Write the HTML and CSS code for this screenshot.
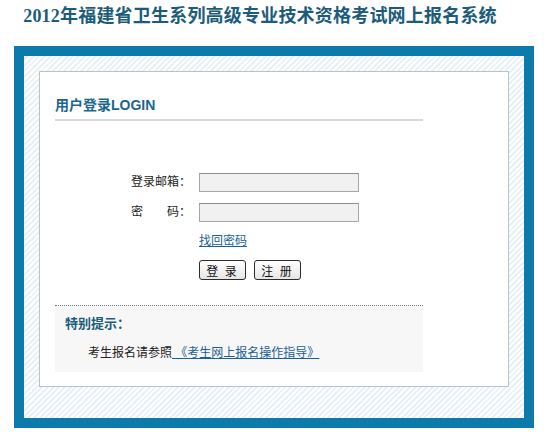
FILE: index.html
```html
<!DOCTYPE html>
<html lang="zh-CN">
<head>
<meta charset="utf-8">
<title>2012年福建省卫生系列高级专业技术资格考试网上报名系统</title>
<link rel="stylesheet" href="styles.css">
</head>
<body>
<h1 class="site-title">2012年福建省卫生系列高级专业技术资格考试网上报名系统</h1>
<div class="frame">
  <div class="panel">
    <div class="content">
      <h2 class="login-title">用户登录LOGIN</h2>
      <form class="login-form">
        <label class="label" for="email">登录邮箱：</label>
        <input class="field" id="email" type="text">
        <label class="label" for="pwd">密&emsp;&emsp;码：</label>
        <input class="field" id="pwd" type="password">
        <span></span>
        <a class="forgot" href="#">找回密码</a>
        <span></span>
        <div class="buttons">
          <button class="btn" type="button">登 录</button>
          <button class="btn" type="button">注 册</button>
        </div>
      </form>
      <div class="tips">
        <div class="tips-title">特别提示：</div>
        <p class="tips-text">考生报名请参照<a class="guide" href="#">&nbsp;《考生网上报名操作指导》</a></p>
      </div>
    </div>
  </div>
</div>
</body>
</html>
```
FILE: styles.css
```css
html, body {
  margin: 0;
  padding: 0;
  background: #fff;
}
body {
  font-family: "Liberation Sans", "Noto Sans CJK SC", sans-serif;
  font-size: 12px;
  color: #222;
}
.site-title {
  margin: 0;
  width: 520px;
  height: 46px;
  padding-top: 1px;
  box-sizing: border-box;
  line-height: 30px;
  text-align: center;
  font-family: "Liberation Serif", "Noto Sans CJK SC", serif;
  font-size: 18px;
  font-weight: bold;
  color: #1c5c7b;
  letter-spacing: 0.2px;
}
.frame {
  margin-left: 14px;
  width: 520px;
  height: 382px;
  box-sizing: border-box;
  border: 10px solid #0c7aab;
  padding: 15px;
  background: repeating-linear-gradient(135deg, #ffffff 0 2px, #e8f1f7 2px 4px);
}
.panel {
  width: 470px;
  height: 316px;
  box-sizing: border-box;
  border: 1px solid #b4c4cc;
  background: #fff;
  padding: 0 15px;
}
.content {
  width: 368px;
}
.login-title {
  margin: 0;
  padding-top: 23px;
  height: 49px;
  box-sizing: border-box;
  border-bottom: 2px solid #d9d9d9;
  line-height: 20px;
  font-size: 14px;
  font-weight: bold;
  color: #1a678a;
}
.login-form {
  display: grid;
  grid-template-columns: 136px 160px;
  column-gap: 8px;
  margin: 52px 0 0;
}
.label {
  text-align: right;
  line-height: 19px;
  height: 19px;
  color: #222;
}
.field {
  width: 160px;
  height: 19px;
  box-sizing: border-box;
  border: 1px solid #a6a6a6;
  border-top-color: #8c8c8c;
  background: #f1f1f1;
  margin: 0;
  padding: 0 3px;
  font-size: 12px;
}
#pwd, .login-form label[for="pwd"] {
  margin-top: 11px;
}
.forgot {
  margin-top: 12px;
  line-height: 14px;
  color: #1a5f96;
  text-decoration: underline;
}
.buttons {
  display: flex;
  gap: 8px;
  margin-top: 12px;
}
.btn {
  height: 20px;
  padding: 0 5px;
  box-sizing: border-box;
  border: 1px solid #2c2c2c;
  border-radius: 3px;
  background: linear-gradient(#ffffff, #e6e6e6);
  font-family: "Noto Sans CJK SC", sans-serif;
  font-size: 12px;
  line-height: 17px;
  color: #111;
  letter-spacing: 2px;
  width: 47px;
}
.tips {
  margin-top: 25px;
  border-top: 1px dotted #7a7a7a;
  background: #f7f7f7;
  height: 67px;
  box-sizing: border-box;
  padding: 9px 10px 0;
}
.tips-title {
  font-size: 13px;
  font-weight: bold;
  color: #1a5c7a;
  line-height: 18px;
}
.tips-text {
  margin: 12px 0 0;
  padding-left: 23px;
  line-height: 16px;
  color: #222;
}
.guide {
  color: #1a5f96;
  text-decoration: underline;
}
```
